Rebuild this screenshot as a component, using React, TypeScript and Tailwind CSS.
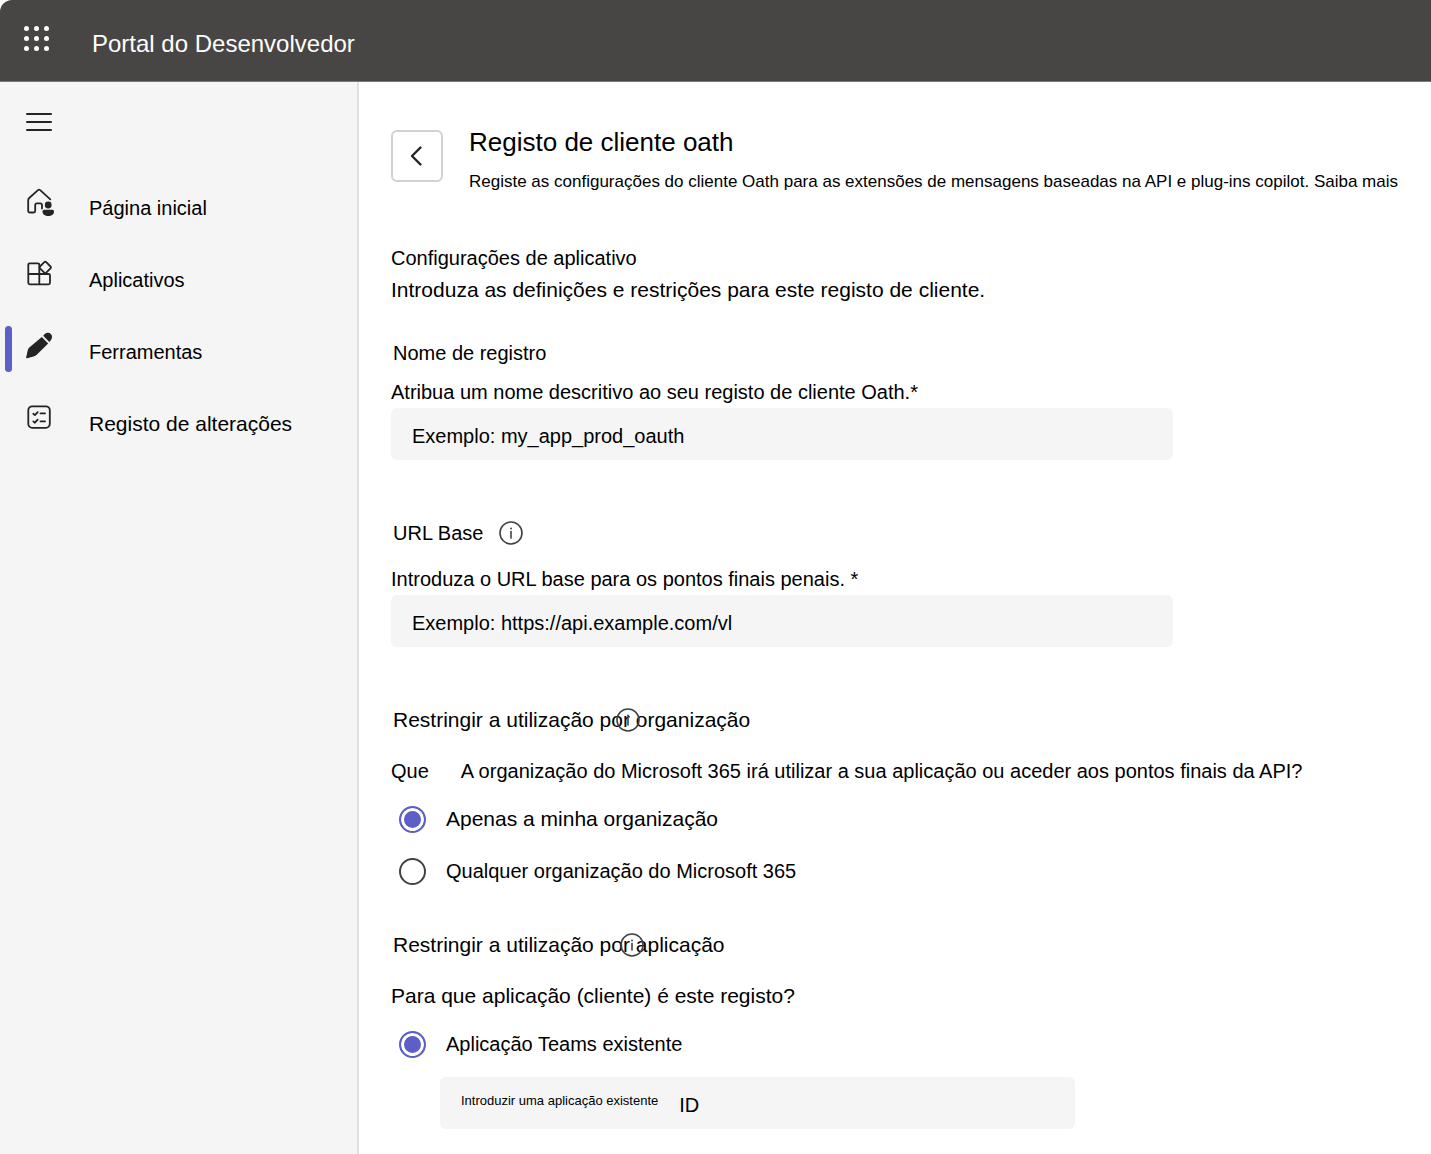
import React from "react";

function InfoIcon() {
  return (
    <svg viewBox="0 0 24 24" className="size-6" fill="none" stroke="#424242" strokeWidth="1.6" aria-hidden="true">
      <circle cx="12" cy="12" r="11" />
      <path d="M12 10.5v6.5" strokeLinecap="round" />
      <circle cx="12" cy="7.5" r="1" fill="#424242" stroke="none" />
    </svg>
  );
}

function HomeIcon() {
  return (
    <svg viewBox="0 0 28 28" className="size-7" fill="none" stroke="#242424" strokeWidth="1.8" strokeLinecap="round" strokeLinejoin="round" aria-hidden="true">
      <path d="M24.3 11.3 14.200 2.100c-.8-.7-1.400-.7-2.200 0L3.200 10c-.7.600-1 1.300-1 2.300V23c0 1 .5 1.500 1.500 1.500h4c1 0 1.500-.5 1.500-1.500v-5.800c0-1.200.6-1.800 1.800-1.800h3.200c1.200 0 1.800.6 1.800 1.800v3.300" />
      <circle cx="22.200" cy="17" r="3.400" fill="#242424" stroke="none" />
      <path d="M18.300 21.800h8c1.100 0 1.700.7 1.700 1.700 0 3-2.500 4.500-5.700 4.500s-5.800-1.500-5.800-4.500c0-1 .7-1.700 1.800-1.700z" fill="#242424" stroke="none" />
    </svg>
  );
}

function AppsIcon() {
  return (
    <svg viewBox="0 0 28 28" className="size-7" fill="none" stroke="#242424" strokeWidth="1.8" strokeLinejoin="round" aria-hidden="true">
      <path d="M13.300 14V4.800c0-1-.6-1.500-1.500-1.500h-8c-1 0-1.500.5-1.500 1.500v18c0 1 .5 1.500 1.500 1.500h18.700c1 0 1.500-.5 1.500-1.500v-7.300c0-1-.5-1.500-1.500-1.500H2.300M13.300 14v10.300" />
      <path d="M18.300 2.200c.6-.6 1.300-.6 1.900 0l4.300 4.300c.6.6.6 1.300 0 1.900l-4.300 4.300c-.6.6-1.300.6-1.900 0L14 8.400c-.6-.6-.6-1.300 0-1.900z" />
    </svg>
  );
}

function PencilIcon() {
  return (
    <svg viewBox="0 0 28 28" className="size-7" fill="#242424" aria-hidden="true">
      <path d="M15.800 5 22.200 11.400 11 22.600c-.8.800-1.600 1.300-2.700 1.700L1.200 26.300c-.8.200-1.200-.2-1-1L1.700 18.400c.3-1.100.8-2 1.600-2.800z" />
      <path d="M17.200 3.700 18.800 2c2-1.900 4.500-1.600 6 0 1.700 1.600 1.800 4.200 0 6.200l-1.500 1.900z" />
    </svg>
  );
}

function ListIcon() {
  return (
    <svg viewBox="0 0 28 28" className="size-7" fill="none" stroke="#242424" strokeWidth="1.8" strokeLinecap="round" strokeLinejoin="round" aria-hidden="true">
      <rect x="2.300" y="2.300" width="21.500" height="21.500" rx="4" />
      <path d="M7.300 9.800l1.600 1.300 2.800-3M7.300 17.400l1.600 1.300 2.800-3M14.500 9.400H19M14.500 17.400H19" />
    </svg>
  );
}

const navItems = [
  { label: "Página inicial", icon: <HomeIcon />, size: "text-[20px]" },
  { label: "Aplicativos", icon: <AppsIcon />, size: "text-[20px]" },
  { label: "Ferramentas", icon: <PencilIcon />, size: "text-[20px]", active: true },
  { label: "Registo de alterações", icon: <ListIcon />, size: "text-[21px]" },
];

function Radio({ name, label, size, defaultChecked }: { name: string; label: string; size: string; defaultChecked?: boolean }) {
  return (
    <label className={`flex items-center gap-5 pl-2 leading-6 ${size}`}>
      <input
        type="radio"
        name={name}
        defaultChecked={defaultChecked}
        className="size-[27px] shrink-0 appearance-none rounded-full border-2 border-[#424242] bg-white checked:border-[#5b5fc7] checked:bg-[#5b5fc7] checked:shadow-[inset_0_0_0_3px_white]"
      />
      <span className="pb-0.5">{label}</span>
    </label>
  );
}

export default function App() {
  return (
    <div className="flex min-h-screen flex-col bg-white text-black [font-family:'Liberation_Sans',Arial,sans-serif]">
      <header className="flex h-[82px] items-center gap-[43px] rounded-tl-xl border-b border-[#7a7877] bg-[#484644] pl-6 text-white">
        <button type="button" aria-label="Aplicações" className="mb-1">
          <svg viewBox="0 0 25 25" className="size-[25px]" fill="currentColor" aria-hidden="true">
            {[2.5, 12.5, 22.5].map((y) => [2.5, 12.5, 22.5].map((x) => <circle key={`${x}-${y}`} cx={x} cy={y} r="2.5" />))}
          </svg>
        </button>
        <span className="mt-1.5 text-[24px] leading-8">Portal do Desenvolvedor</span>
      </header>

      <div className="flex flex-1">
        <aside className="w-[359px] shrink-0 border-r-2 border-[#e0e0e0] bg-[#f5f5f5] pt-6">
          <button type="button" aria-label="Menu" className="ml-[26px] block py-1.5">
            <svg viewBox="0 0 26 20" className="h-5 w-[26px]" stroke="#242424" strokeWidth="2" strokeLinecap="round" aria-hidden="true">
              <path d="M1 2h24M1 10h24M1 18h24" />
            </svg>
          </button>
          <nav className="mt-7">
            {navItems.map((item) => (
              <a key={item.label} href="#" className="relative flex h-[72px] items-center gap-[35px] pl-[26px]">
                {item.active && <span className="absolute top-4 left-[5px] h-[46px] w-[7px] rounded-full bg-[#5b5fc7]" />}
                {item.icon}
                <span className={`pt-3 leading-6 ${item.size}`}>{item.label}</span>
              </a>
            ))}
          </nav>
        </aside>

        <main className="min-w-0 flex-1 pt-11 pr-6 pb-6 pl-8 text-[20px] leading-6">
          <div className="flex gap-[26px]">
            <button type="button" aria-label="Voltar" className="mt-1 flex size-[52px] shrink-0 items-center justify-center rounded-md border-2 border-[#d1d1d1] bg-white">
              <svg viewBox="0 0 14 22" className="h-[22px] w-3.5" fill="none" stroke="#242424" strokeWidth="2.4" strokeLinecap="round" strokeLinejoin="round" aria-hidden="true">
                <path d="M10.500 2.500 2 11l8.500 8.500" />
              </svg>
            </button>
            <div>
              <h1 className="text-[26px] leading-8">Registo de cliente oath</h1>
              <p className="mt-3 text-[17px] leading-6">
                Registe as configurações do cliente Oath para as extensões de mensagens baseadas na API e plug-ins copilot. <a href="#">Saiba mais</a>
              </p>
            </div>
          </div>

          <section className="mt-[52px]">
            <h2>Configurações de aplicativo</h2>
            <p className="mt-2 text-[21px]">Introduza as definições e restrições para este registo de cliente.</p>
          </section>

          <section className="mt-[39px]">
            <h3 className="pl-0.5">Nome de registro</h3>
            <label htmlFor="nome" className="mt-[15px] block">Atribua um nome descritivo ao seu registo de cliente Oath.*</label>
            <input id="nome" type="text" placeholder="Exemplo: my_app_prod_oauth" className="mt-1 block h-[52px] w-full max-w-[782px] rounded-md bg-[#f5f5f5] px-[21px] pt-1 placeholder:text-black placeholder:opacity-100" />
          </section>

          <section className="mt-[61px]">
            <div className="flex items-center gap-4 pl-0.5">
              <h3>URL Base</h3>
              <InfoIcon />
            </div>
            <label htmlFor="url" className="mt-[22px] block">Introduza o URL base para os pontos finais penais. *</label>
            <input id="url" type="text" placeholder="Exemplo: https://api.example.com/vl" className="mt-1 block h-[52px] w-full max-w-[782px] rounded-md bg-[#f5f5f5] px-[21px] pt-1 placeholder:text-black placeholder:opacity-100" />
          </section>

          <section className="mt-[61px]">
            <h3 className="relative pl-0.5 text-[21px]">
              Restringir a utilização por organização
              <span className="absolute top-0 left-[225px]"><InfoIcon /></span>
            </h3>
            <p className="mt-[27px] flex gap-8"><span>Que</span><span>A organização do Microsoft 365 irá utilizar a sua aplicação ou aceder aos pontos finais da API?</span></p>
            <div className="mt-[23px] flex flex-col gap-[25px]">
              <Radio name="org" label="Apenas a minha organização" size="text-[21px]" defaultChecked />
              <Radio name="org" label="Qualquer organização do Microsoft 365" size="text-[20px]" />
            </div>
          </section>

          <section className="mt-[48px]">
            <h3 className="relative pl-0.5 text-[21px]">
              Restringir a utilização por aplicação
              <span className="absolute top-0 left-[229px]"><InfoIcon /></span>
            </h3>
            <p className="mt-[27px] text-[21px]">Para que aplicação (cliente) é este registo?</p>
            <div className="mt-[23px]">
              <Radio name="app" label="Aplicação Teams existente" size="text-[20px]" defaultChecked />
            </div>
            <div className="mt-[19px] ml-[49px] flex h-[52px] max-w-[635px] items-center gap-[21px] rounded-md bg-[#f5f5f5] px-[21px]">
              <label htmlFor="app-id" className="pb-1 text-[13px] leading-5">Introduzir uma aplicação existente</label>
              <input id="app-id" type="text" placeholder="ID" className="min-w-0 flex-1 bg-transparent pt-1 placeholder:text-black placeholder:opacity-100" />
            </div>
          </section>
        </main>
      </div>
    </div>
  );
}
